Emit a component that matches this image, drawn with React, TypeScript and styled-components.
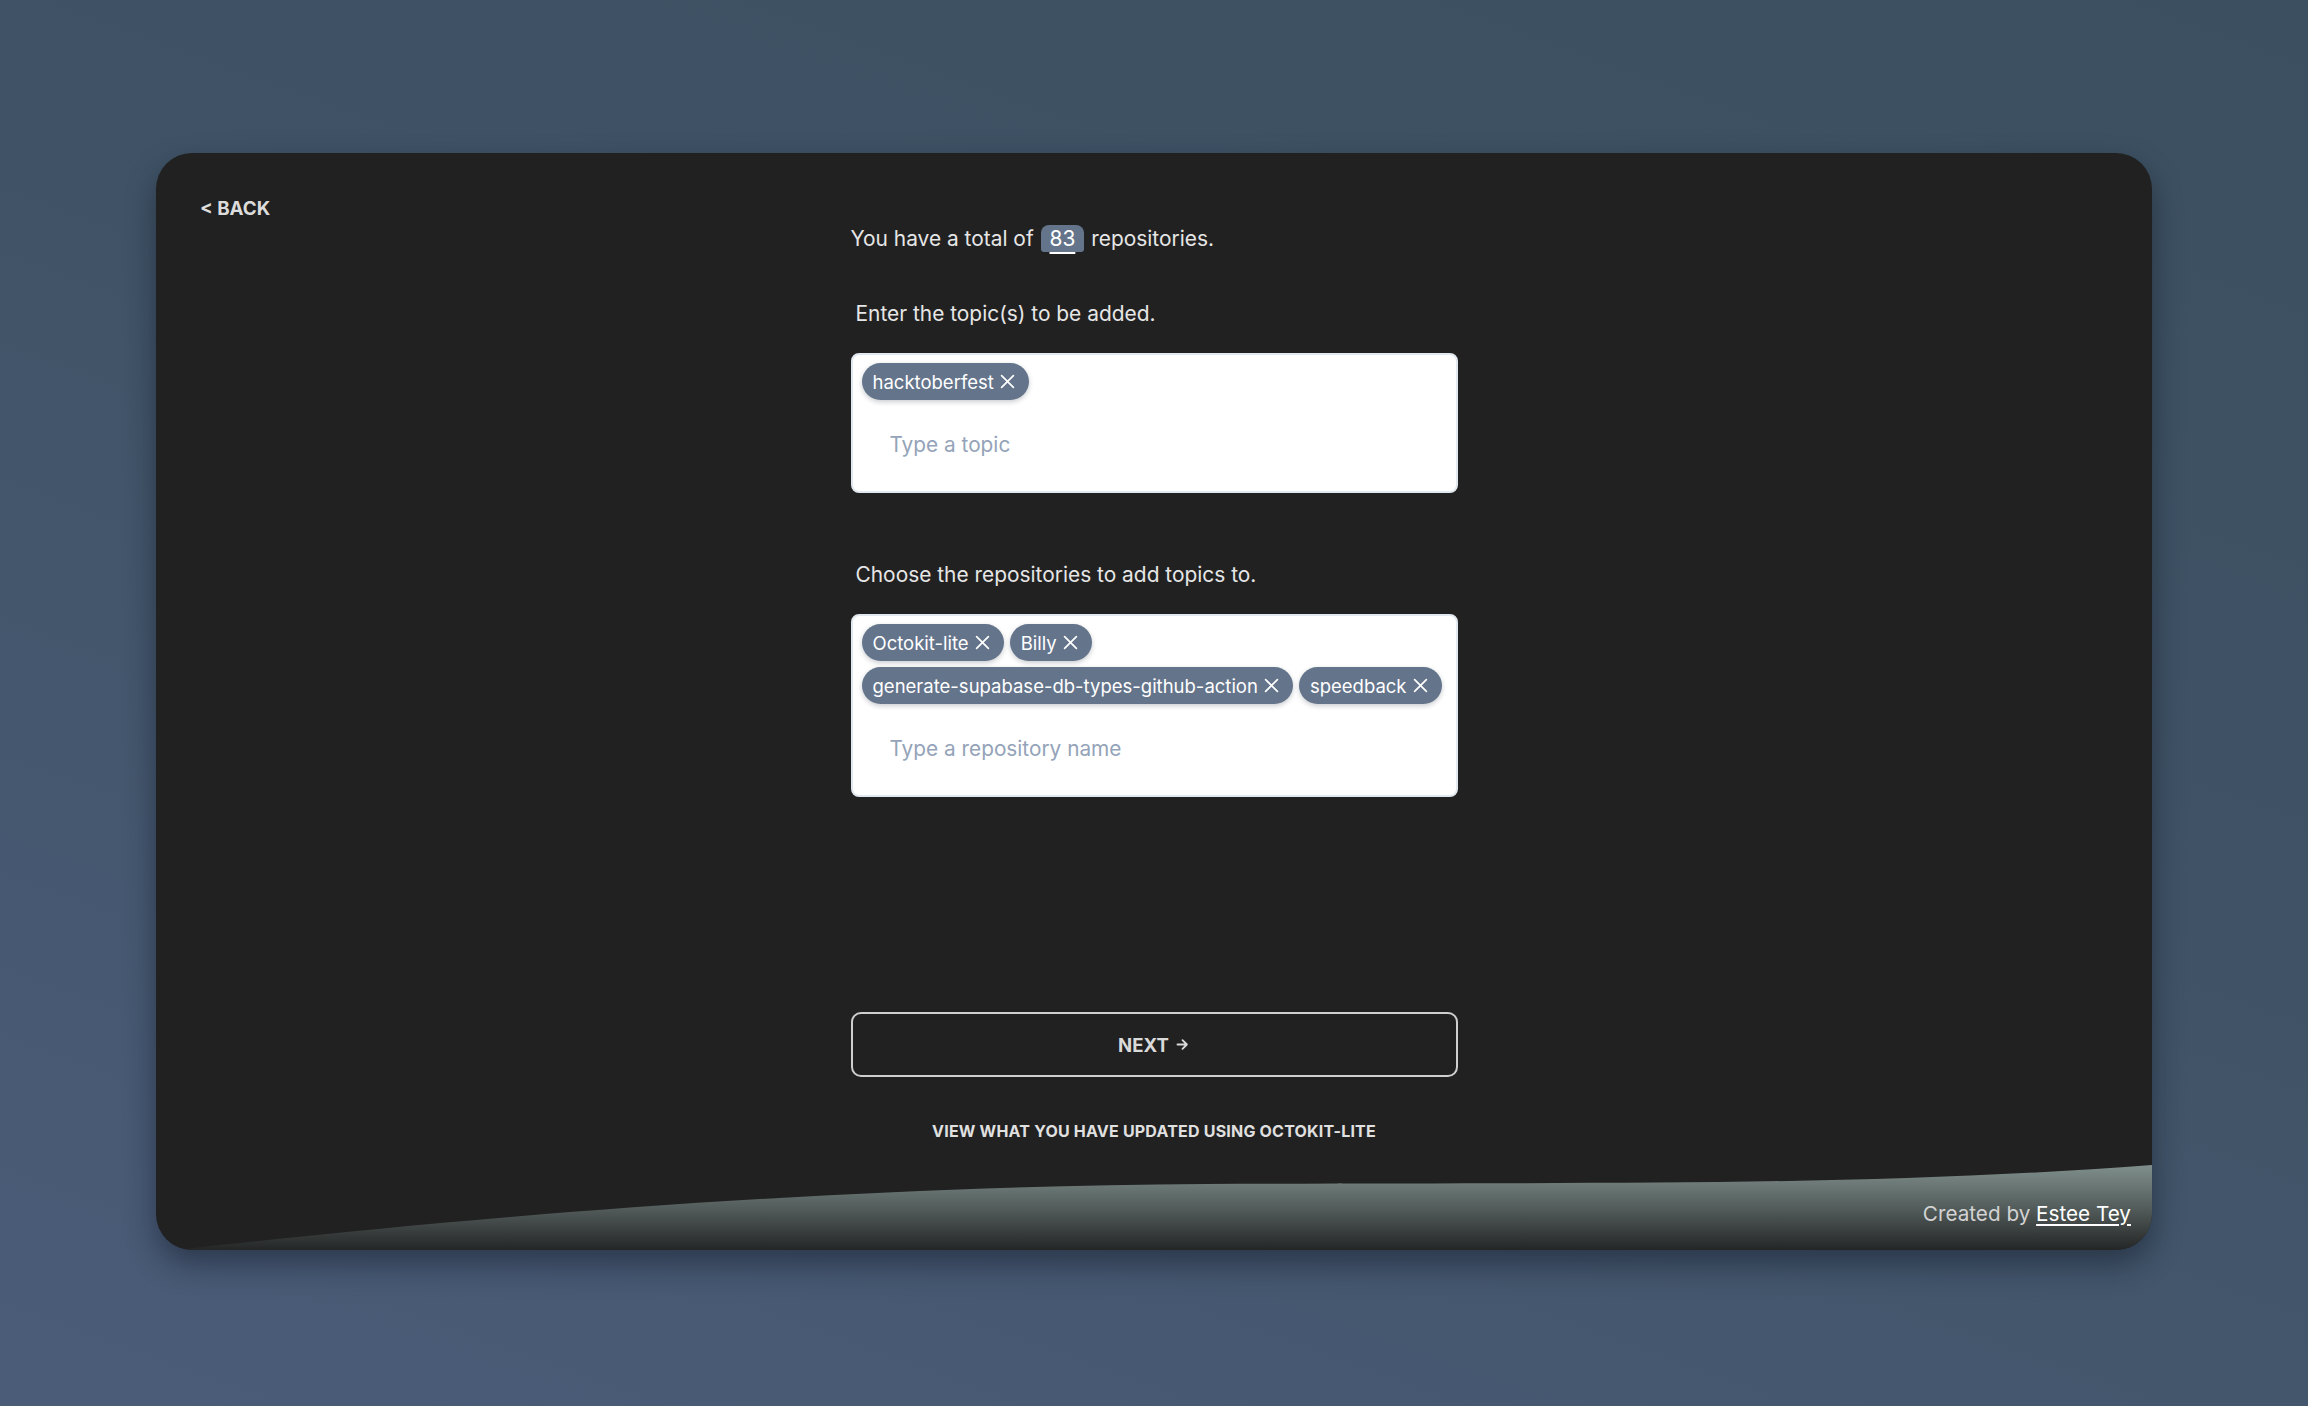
import styled, { createGlobalStyle } from "styled-components";

const GlobalStyle = createGlobalStyle`
  html, body {
    margin: 0;
    padding: 0;
  }
  body {
    font-family: Inter, "Noto Sans", "Liberation Sans", sans-serif;
    background: #3e5164;
  }
  * {
    box-sizing: border-box;
  }
`;

const topics = ["hacktoberfest"];
const repos = ["Octokit-lite", "Billy", "generate-supabase-db-types-github-action", "speedback"];

const CloseIcon = () => (
  <svg width="15" height="15" viewBox="0 0 14 14" fill="none">
    <path d="M1.5 1.5l11 11M12.5 1.5l-11 11" stroke="currentColor" strokeWidth="1.6" strokeLinecap="round" />
  </svg>
);

const ArrowIcon = () => (
  <svg width="15" height="15" viewBox="0 0 24 24" fill="none">
    <path d="M4 12h15M12 5l7 7-7 7" stroke="currentColor" strokeWidth="3" strokeLinecap="round" strokeLinejoin="round" />
  </svg>
);

const TagInput = ({ tags, placeholder }: { tags: string[]; placeholder: string }) => (
  <TagBox>
    <ChipList>
      {tags.map((tag) => (
        <Chip key={tag}>
          {tag}
          <CloseIcon />
        </Chip>
      ))}
    </ChipList>
    <Field placeholder={placeholder} />
  </TagBox>
);

const Wave = () => (
  <WaveSvg viewBox="0 0 1996 87" preserveAspectRatio="none">
    <defs>
      <linearGradient id="waveFill" x1="0" y1="0" x2="0" y2="87" gradientUnits="userSpaceOnUse">
        <stop offset="0" stopColor="#82918e" />
        <stop offset="0.45" stopColor="#596462" />
        <stop offset="1" stopColor="#242626" />
      </linearGradient>
    </defs>
    <path d="M20 87 C 300 56, 650 24, 1050 21 C 1450 19, 1700 24, 1996 2 L1996 87 Z" fill="url(#waveFill)" />
  </WaveSvg>
);

const App = () => {
  return (
    <>
      <GlobalStyle />
      <Page>
        <Card>
          <TopBar>
            <BackLink href="#">&lt; BACK</BackLink>
          </TopBar>
          <Main>
            <TotalLine>
              You have a total of <Count>83</Count> repositories.
            </TotalLine>
            <Label $top={45}>Enter the topic(s) to be added.</Label>
            <TagInput tags={topics} placeholder="Type a topic" />
            <Label $top={67}>Choose the repositories to add topics to.</Label>
            <TagInput tags={repos} placeholder="Type a repository name" />
            <NextButton>
              NEXT <ArrowIcon />
            </NextButton>
            <ViewLink href="#">VIEW WHAT YOU HAVE UPDATED USING OCTOKIT-LITE</ViewLink>
          </Main>
          <Spacer />
          <Footer>
            <Wave />
            <FooterText>
              Created by <AuthorLink href="#">Estee Tey</AuthorLink>
            </FooterText>
          </Footer>
        </Card>
      </Page>
    </>
  );
};

export default App;

const Page = styled.div`
  min-height: 1406px;
  padding: 153px 156px 156px;
  background: linear-gradient(200deg, #3c4f60 0%, #405366 45%, #4b5c79 100%);
`;

const Card = styled.div`
  height: 1097px;
  display: flex;
  flex-direction: column;
  background: #212121;
  border-radius: 36px;
  overflow: hidden;
  box-shadow: 0 14px 30px rgba(12, 18, 30, 0.45);
`;

const TopBar = styled.div`
  padding: 45px 44px 0;
  height: 67px;
`;

const BackLink = styled.a`
  display: inline-block;
  font-size: 18.8px;
  line-height: 22px;
  font-weight: 700;
  color: #dcdcdc;
  text-decoration: none;
`;

const Main = styled.div`
  width: 607px;
  align-self: center;
  margin-top: 4px;
  display: flex;
  flex-direction: column;
`;

const TotalLine = styled.p`
  margin: 0;
  font-size: 20.9px;
  line-height: 30px;
  color: #e6e6e6;
`;

const Count = styled.span`
  display: inline-block;
  margin: 0 1px;
  padding: 0 9px;
  line-height: 27px;
  background: #64748b;
  color: #ffffff;
  border-radius: 8px 8px 3px 3px;
  text-decoration: underline;
  text-decoration-thickness: 2px;
  text-underline-offset: 6px;
`;

const Label = styled.p<{ $top: number }>`
  margin: ${(p) => p.$top}px 0 24px;
  padding-left: 5px;
  font-size: 20.9px;
  line-height: 30px;
  color: #e6e6e6;
`;

const TagBox = styled.div`
  background: #ffffff;
  border: 2px solid #e2e8f0;
  border-radius: 8px;
  padding: 8px 9px 9px;
`;

const ChipList = styled.div`
  display: flex;
  flex-wrap: wrap;
  gap: 6px;
`;

const Chip = styled.span`
  display: inline-flex;
  align-items: center;
  gap: 6px;
  height: 37px;
  padding: 0 14px 0 11px;
  border-radius: 999px;
  background: #64748b;
  color: #ffffff;
  font-size: 18.5px;
  box-shadow: 0 2px 5px rgba(15, 23, 42, 0.22);
`;

const Field = styled.input`
  display: block;
  width: 100%;
  height: 76px;
  margin-top: 6px;
  padding: 0 0 0 28px;
  border: none;
  outline: none;
  background: transparent;
  font-family: inherit;
  font-size: 20.8px;
  color: #334155;
  &::placeholder {
    color: #94a3b8;
  }
`;

const NextButton = styled.button`
  margin-top: 215px;
  height: 65px;
  display: flex;
  align-items: center;
  justify-content: center;
  gap: 6px;
  background: transparent;
  border: 2px solid #cfcfcf;
  border-radius: 10px;
  color: #dadada;
  font-family: inherit;
  font-size: 18.6px;
  font-weight: 700;
`;

const ViewLink = styled.a`
  margin-top: 44px;
  text-align: center;
  font-size: 16px;
  line-height: 20px;
  font-weight: 700;
  letter-spacing: 0.2px;
  color: #e0e0e0;
  text-decoration: none;
`;

const Spacer = styled.div`
  flex: 1;
`;

const Footer = styled.div`
  position: relative;
  height: 87px;
  display: flex;
  align-items: center;
  justify-content: flex-end;
  padding: 13px 21px 0 0;
`;

const WaveSvg = styled.svg`
  position: absolute;
  inset: 0;
  width: 100%;
  height: 100%;
`;

const FooterText = styled.span`
  position: relative;
  font-size: 20.7px;
  color: #d2d2d2;
`;

const AuthorLink = styled.a`
  color: #ffffff;
  text-decoration: underline;
  text-underline-offset: 3px;
`;
